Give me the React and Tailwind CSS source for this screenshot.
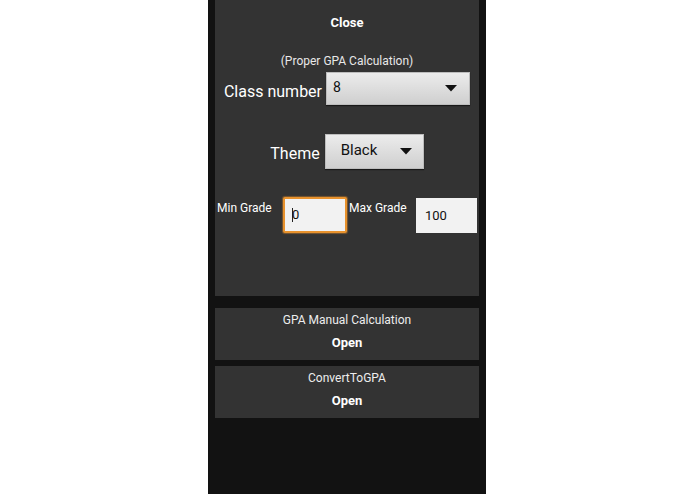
import React from "react";

function Caret() {
  return (
    <svg width="12" height="7" viewBox="0 0 12 7" className="shrink-0">
      <path d="M0 0 L12 0 L6 6.5 Z" fill="#111" />
    </svg>
  );
}

function Select({ value, className, textClass }) {
  return (
    <div
      className={`flex items-center justify-between bg-gradient-to-b from-[#ececec] to-[#cfcfcf] border border-[#bdbdbd] shadow-[0_1px_1px_rgba(0,0,0,0.5)] ${className}`}
    >
      <span className={`text-[#111] ${textClass}`}>{value}</span>
      <Caret />
    </div>
  );
}

function Card({ title }) {
  return (
    <div className="h-[52px] bg-[#333333] flex flex-col items-center text-white">
      <div className="mt-[4px] text-[12px] leading-[16px] text-[#ededed]">{title}</div>
      <div className="mt-[7px] text-[13px] leading-[16px] font-bold">Open</div>
    </div>
  );
}

export default function App() {
  return (
    <div
      className="w-full h-[494px] bg-white flex justify-center overflow-hidden"
      style={{ fontFamily: "Roboto, 'Noto Sans', sans-serif" }}
    >
      <div className="ml-[-1px] w-[278px] h-full bg-[#121212] px-[7px] flex flex-col">
        <div className="h-[296px] bg-[#333333] flex flex-col text-white">
          <div className="mt-[15px] text-center text-[13px] leading-[16px] font-bold">Close</div>

          <div className="mt-[22px] text-center text-[12px] leading-[16px] text-[#e8e8e8]">
            (Proper GPA Calculation)
          </div>

          <div className="mt-[3px] flex items-center justify-center">
            <span className="text-[16px] leading-[20px] mr-[4px] mt-[6px]">Class number</span>
            <Select
              value="8"
              className="w-[144px] h-[33px] pl-[6px] pr-[12px]"
              textClass="text-[14px] -mt-[3px]"
            />
          </div>

          <div className="mt-[29px] flex items-center justify-center">
            <span className="text-[16px] leading-[20px] mr-[5px] mt-[4px]">Theme</span>
            <Select
              value="Black"
              className="w-[99px] h-[35px] pl-[15px] pr-[11px]"
              textClass="text-[15px] -mt-[3px]"
            />
          </div>

          <div className="mt-[28px] pl-[2px] flex items-start">
            <span className="w-[66px] pt-[3px] text-[12px] leading-[16px]">Min Grade</span>
            <div className="w-[64px] h-[36px] bg-[#f2f2f2] border-2 border-[#e8922d] rounded-[2px] flex items-center pl-[7px] shadow-[0_0_1px_1px_rgba(232,146,45,0.4)]">
              <span className="w-px h-[14px] bg-[#222] mr-px" />
              <span className="text-[13px] text-[#111] -ml-[2px]">0</span>
            </div>
            <span className="ml-[2px] w-[67px] pt-[3px] text-[12px] leading-[16px]">Max Grade</span>
            <div className="mt-[1px] w-[61px] h-[35px] bg-[#f2f2f2] flex items-center pl-[9px]">
              <span className="text-[13px] text-[#111]">100</span>
            </div>
          </div>
        </div>

        <div className="mt-[12px]">
          <Card title="GPA Manual Calculation" />
        </div>
        <div className="mt-[6px]">
          <Card title="ConvertToGPA" />
        </div>
      </div>
    </div>
  );
}
